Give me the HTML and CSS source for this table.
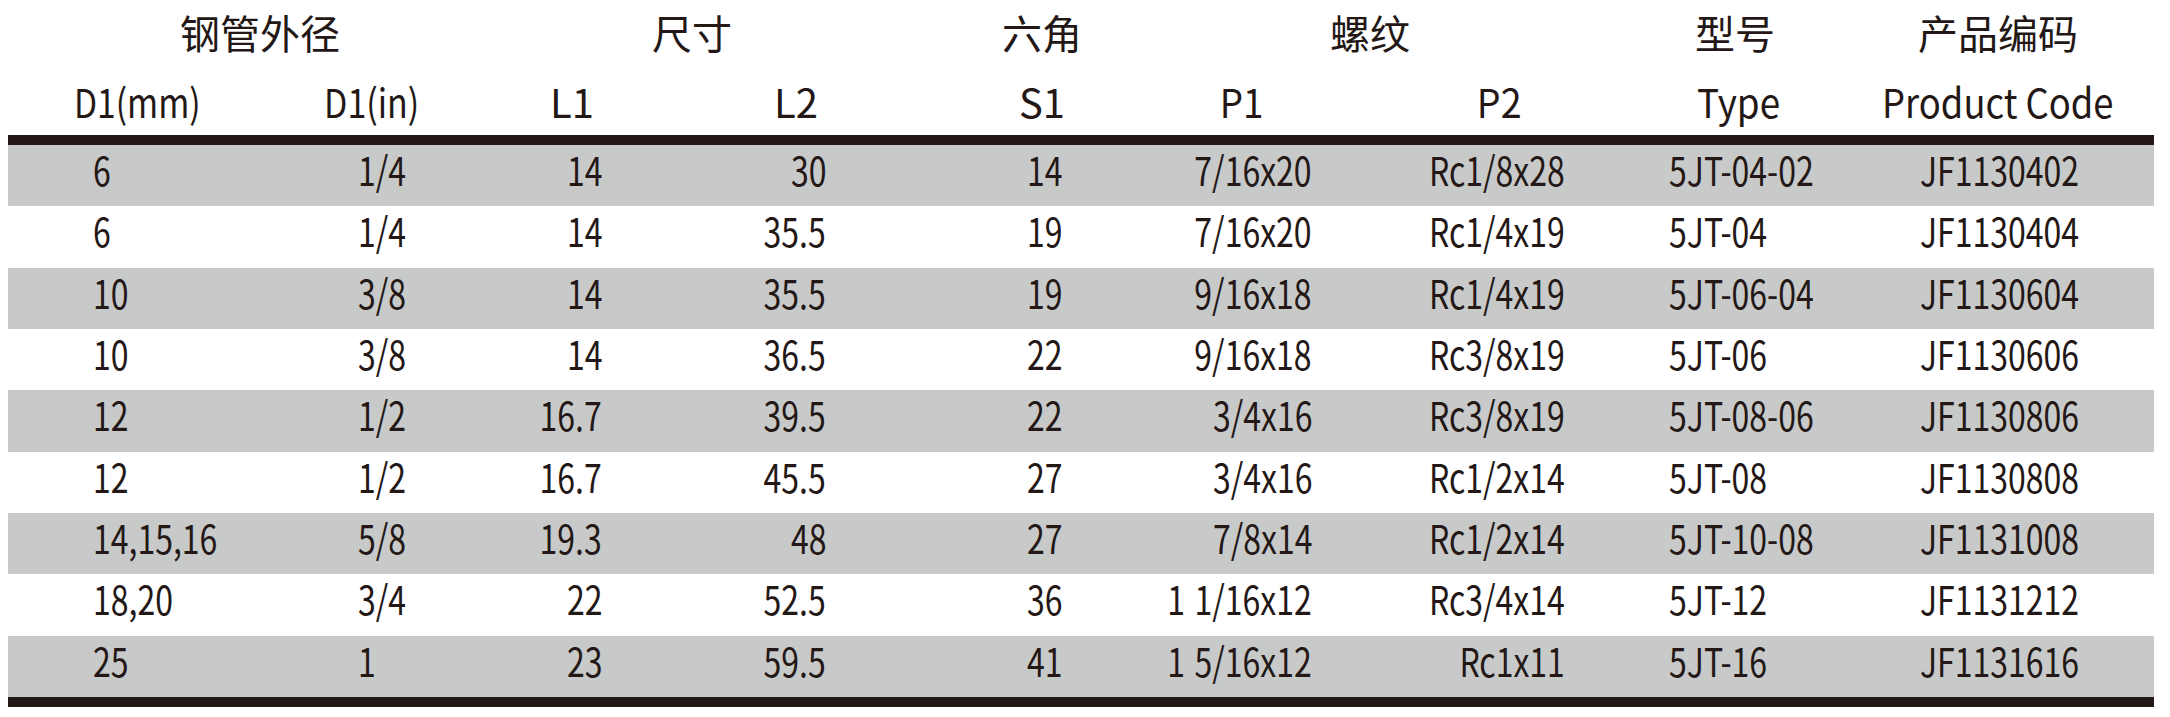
FILE: index.html
```html
<!DOCTYPE html>
<html lang="zh-CN">
<head>
<meta charset="utf-8">
<title>钢管外径规格表</title>
<link rel="stylesheet" href="styles.css">
</head>
<body>
<div class="spec">
  <div class="row group">
    <div class="g g1">钢管外径</div>
    <div class="g g2">尺寸</div>
    <div class="g g3">六角</div>
    <div class="g g4">螺纹</div>
    <div class="g g5">型号</div>
    <div class="g g6">产品编码</div>
  </div>
  <div class="row head">
    <div class="h c1"><span>D1(mm)</span></div>
    <div class="h c2"><span>D1(in)</span></div>
    <div class="h c3"><span>L1</span></div>
    <div class="h c4"><span>L2</span></div>
    <div class="h c5"><span>S1</span></div>
    <div class="h c6"><span>P1</span></div>
    <div class="h c7"><span>P2</span></div>
    <div class="h c8"><span>Type</span></div>
    <div class="h c9"><span>Product Code</span></div>
  </div>
  <div class="rule"></div>
  <div class="body">
    <div class="row data alt"><div class="d c1 l"><span>6</span></div><div class="d c2 l"><span>1/4</span></div><div class="d c3 r"><span>14</span></div><div class="d c4 r"><span>30</span></div><div class="d c5 r"><span>14</span></div><div class="d c6 r"><span>7/16x20</span></div><div class="d c7 r"><span>Rc1/8x28</span></div><div class="d c8 l"><span>5JT-04-02</span></div><div class="d c9 l"><span>JF1130402</span></div></div>
    <div class="row data"><div class="d c1 l"><span>6</span></div><div class="d c2 l"><span>1/4</span></div><div class="d c3 r"><span>14</span></div><div class="d c4 r"><span>35.5</span></div><div class="d c5 r"><span>19</span></div><div class="d c6 r"><span>7/16x20</span></div><div class="d c7 r"><span>Rc1/4x19</span></div><div class="d c8 l"><span>5JT-04</span></div><div class="d c9 l"><span>JF1130404</span></div></div>
    <div class="row data alt"><div class="d c1 l"><span>10</span></div><div class="d c2 l"><span>3/8</span></div><div class="d c3 r"><span>14</span></div><div class="d c4 r"><span>35.5</span></div><div class="d c5 r"><span>19</span></div><div class="d c6 r"><span>9/16x18</span></div><div class="d c7 r"><span>Rc1/4x19</span></div><div class="d c8 l"><span>5JT-06-04</span></div><div class="d c9 l"><span>JF1130604</span></div></div>
    <div class="row data"><div class="d c1 l"><span>10</span></div><div class="d c2 l"><span>3/8</span></div><div class="d c3 r"><span>14</span></div><div class="d c4 r"><span>36.5</span></div><div class="d c5 r"><span>22</span></div><div class="d c6 r"><span>9/16x18</span></div><div class="d c7 r"><span>Rc3/8x19</span></div><div class="d c8 l"><span>5JT-06</span></div><div class="d c9 l"><span>JF1130606</span></div></div>
    <div class="row data alt"><div class="d c1 l"><span>12</span></div><div class="d c2 l"><span>1/2</span></div><div class="d c3 r"><span>16.7</span></div><div class="d c4 r"><span>39.5</span></div><div class="d c5 r"><span>22</span></div><div class="d c6 r"><span>3/4x16</span></div><div class="d c7 r"><span>Rc3/8x19</span></div><div class="d c8 l"><span>5JT-08-06</span></div><div class="d c9 l"><span>JF1130806</span></div></div>
    <div class="row data"><div class="d c1 l"><span>12</span></div><div class="d c2 l"><span>1/2</span></div><div class="d c3 r"><span>16.7</span></div><div class="d c4 r"><span>45.5</span></div><div class="d c5 r"><span>27</span></div><div class="d c6 r"><span>3/4x16</span></div><div class="d c7 r"><span>Rc1/2x14</span></div><div class="d c8 l"><span>5JT-08</span></div><div class="d c9 l"><span>JF1130808</span></div></div>
    <div class="row data alt"><div class="d c1 l"><span>14,15,16</span></div><div class="d c2 l"><span>5/8</span></div><div class="d c3 r"><span>19.3</span></div><div class="d c4 r"><span>48</span></div><div class="d c5 r"><span>27</span></div><div class="d c6 r"><span>7/8x14</span></div><div class="d c7 r"><span>Rc1/2x14</span></div><div class="d c8 l"><span>5JT-10-08</span></div><div class="d c9 l"><span>JF1131008</span></div></div>
    <div class="row data"><div class="d c1 l"><span>18,20</span></div><div class="d c2 l"><span>3/4</span></div><div class="d c3 r"><span>22</span></div><div class="d c4 r"><span>52.5</span></div><div class="d c5 r"><span>36</span></div><div class="d c6 r"><span>1 1/16x12</span></div><div class="d c7 r"><span>Rc3/4x14</span></div><div class="d c8 l"><span>5JT-12</span></div><div class="d c9 l"><span>JF1131212</span></div></div>
    <div class="row data alt"><div class="d c1 l"><span>25</span></div><div class="d c2 l"><span>1</span></div><div class="d c3 r"><span>23</span></div><div class="d c4 r"><span>59.5</span></div><div class="d c5 r"><span>41</span></div><div class="d c6 r"><span>1 5/16x12</span></div><div class="d c7 r"><span>Rc1x11</span></div><div class="d c8 l"><span>5JT-16</span></div><div class="d c9 l"><span>JF1131616</span></div></div>
  </div>
  <div class="rule"></div>
</div>
</body>
</html>
```

FILE: styles.css
```css
html, body {
  margin: 0;
  padding: 0;
  background: #ffffff;
}

body {
  color: #231815;
  font-family: "Noto Sans CJK SC", "Noto Sans", sans-serif;
  font-size: 40px;
}

.spec {
  width: 2146px;
  margin-left: 8px;
}

.row {
  display: grid;
  grid-template-columns: 312px 160px 160px 260px 220px 260px 260px 240px 274px;
}

.group {
  padding-top: 12px;
  line-height: 40px;
}

.g { white-space: nowrap; }
.g1 { grid-column: span 2; padding-left: 172px; }
.g2 { grid-column: span 2; padding-left: 172px; }
.g3 { padding-left: 102px; }
.g4 { grid-column: span 2; padding-left: 210px; }
.g5 { padding-left: 55px; }
.g6 { padding-left: 38px; }

.head {
  padding-top: 28.6px;
  padding-bottom: 14.4px;
  line-height: 40px;
}

.h { white-space: nowrap; }
.h span {
  display: inline-block;
  transform-origin: left center;
}
.h.c1 { padding-left: 66px; }
.h.c1 span { transform: scaleX(0.84); }
.h.c2 { padding-left: 4px; }
.h.c2 span { transform: scaleX(0.85); }
.h.c3 { text-align: right; padding-right: 46px; }
.h.c4 { text-align: right; padding-right: 82px; }
.h.c5 { text-align: right; padding-right: 55px; }
.h.c6 { text-align: right; padding-right: 116px; }
.h.c6 span { transform: scaleX(0.92); transform-origin: right center; }
.h.c7 { text-align: right; padding-right: 118px; }
.h.c7 span { transform: scaleX(0.94); transform-origin: right center; }
.h.c8 { padding-left: 57px; }
.h.c8 span { transform: scaleX(0.92); }
.h.c9 { padding-left: 2px; }
.h.c9 span { transform: scaleX(0.91); }

.rule {
  height: 10px;
  background: #231815;
}

.data {
  height: 61.33px;
  line-height: 40px;
}

.data.alt {
  background: #c8c9c9;
}

.d {
  padding-top: 4px;
  white-space: nowrap;
}

.d span {
  display: inline-block;
  transform: scaleX(0.8);
  word-spacing: 3px;
}

.d.l { text-align: left; }
.d.l span { transform-origin: left center; }
.d.r { text-align: right; }
.d.r span { transform-origin: right center; }

.d.c1 { padding-left: 85px; }
.d.c2 { padding-left: 38px; }
.d.c3 { padding-right: 38px; }
.d.c4 { padding-right: 74px; }
.d.c5 { padding-right: 58px; }
.d.c6 { padding-right: 68px; }
.d.c7 { padding-right: 75px; }
.d.c8 { padding-left: 29px; }
.d.c9 { padding-left: 40px; }
```
